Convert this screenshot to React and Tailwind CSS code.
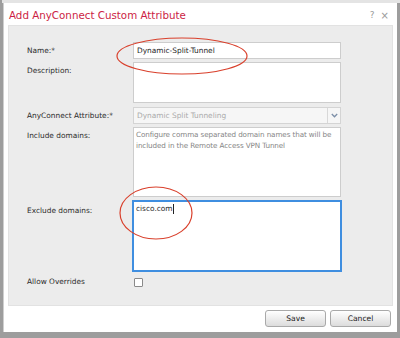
import React from "react";

const font = { fontFamily: '"DejaVu Sans", Verdana, sans-serif' };

function Label({ children, className = "" }) {
    return <div className={`text-[7.4px] text-[#2b2b2b] pl-[18px] ${className}`}>{children}</div>;
}

export default function App() {
    return (
        <div className="w-[400px] h-[338px] bg-[#9d9d9d] overflow-hidden relative" style={font}>
            {/* background strip at the top */}
            <div className="h-[3px] bg-[#e4e4e4] ml-[2px]" />

            {/* Dialog */}
            <div className="ml-[3px] w-[394px] h-[329px] bg-white flex flex-col border-l border-[#cfcfcf]">
                {/* Title */}
                <div className="h-[22px] flex items-center justify-between pl-[5px] pr-[8px]">
                    <h1 className="text-[10.3px] text-[#cc1d44] leading-none pt-[2px]">Add AnyConnect Custom Attribute</h1>
                    <div className="flex items-center gap-[6px] text-[#9a9a9a] text-[9px] leading-none pt-[3px]">
                        <span>?</span>
                        <span className="text-[10px]">×</span>
                    </div>
                </div>

                {/* Panel */}
                <div className="mx-[4px] h-[281px] bg-[#ececec] border border-[#e2e2e2] pt-[16px]">
                    <div className="grid grid-cols-[124px_1fr] gap-y-[3px] items-start">
                        <Label className="h-[17px] flex items-center">Name:*</Label>
                        <div className="h-[17px] w-[208px] bg-white border border-[#cdcdcd] flex items-center px-[3px] text-[7.4px] text-[#1e1e1e]">
                            Dynamic-Split-Tunnel
                        </div>

                        <Label className="pt-[3px]">Description:</Label>
                        <div className="h-[41px] w-[208px] bg-white border border-[#cdcdcd]" />

                        <Label className="h-[17px] flex items-center mt-[1px]">AnyConnect Attribute:*</Label>
                        <div className="h-[17px] w-[208px] mt-[1px] bg-[#f6f6f6] border border-[#d4d4d4] flex items-center">
                            <span className="flex-1 px-[3px] text-[7.4px] text-[#aaa]">Dynamic Split Tunneling</span>
                            <span className="w-[13px] h-full border-l border-[#d8d8d8] flex items-center justify-center">
                                <svg width="7" height="5" viewBox="0 0 7 5">
                                    <path d="M0.8 1 L3.5 3.8 L6.2 1" fill="none" stroke="#7d8fa8" strokeWidth="1.3" />
                                </svg>
                            </span>
                        </div>

                        <Label className="pt-[3px]">Include domains:</Label>
                        <div className="h-[70px] w-[208px] bg-white border border-[#cdcdcd] pl-[2px] pr-0 pt-[1px] text-[7.2px] tracking-[-0.1px] leading-[11px] text-[#858585]">
                            Configure comma separated domain names that will be included in the Remote Access VPN Tunnel
                        </div>

                        <Label className="pt-[5px]">Exclude domains:</Label>
                        <div className="h-[72px] w-[210px] -ml-[1px] bg-white border-2 border-[#3f8ee0] px-[2px] pt-[1px] text-[7.4px] leading-[11px] text-[#1e1e1e] flex items-start">
                            <span>cisco.com</span>
                            <span className="w-px h-[10px] bg-[#222] mt-[1px]" />
                        </div>

                        <Label className="h-[14px] flex items-center">Allow Overrides</Label>
                        <div className="h-[14px] flex items-center">
                            <span className="w-[9px] h-[9px] ml-[1px] bg-white border border-[#8a8a8a] rounded-[1px]" />
                        </div>
                    </div>
                </div>

                {/* Buttons */}
                <div className="flex justify-end gap-[4px] pr-[6px] pt-[4px]">
                    <button className="w-[61px] h-[17px] rounded-[3px] border border-[#a9a9a9] bg-gradient-to-b from-[#ffffff] to-[#dcdcdc] text-[7.6px] text-[#222]" style={font}>Save</button>
                    <button className="w-[61px] h-[17px] rounded-[3px] border border-[#a9a9a9] bg-gradient-to-b from-[#ffffff] to-[#dcdcdc] text-[7.6px] text-[#222]" style={font}>Cancel</button>
                </div>
            </div>

            {/* red annotation circles */}
            <svg className="absolute left-0 top-0 pointer-events-none" width="400" height="338">
                <ellipse cx="182" cy="56" rx="65" ry="18" fill="none" stroke="#d9402c" strokeWidth="1.2" />
                <ellipse cx="156" cy="213" rx="36" ry="26" fill="none" stroke="#d9402c" strokeWidth="1.2" />
            </svg>
        </div>
    );
}
